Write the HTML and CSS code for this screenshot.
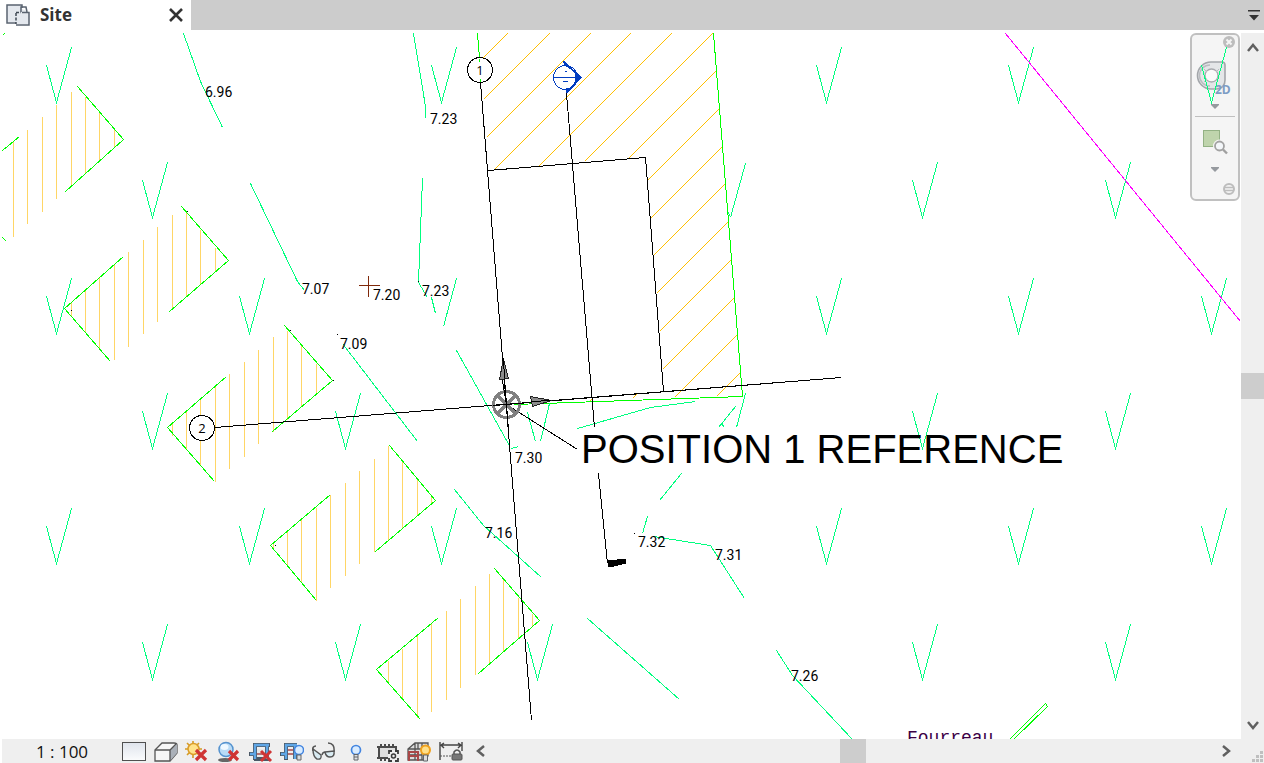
FILE: index.html
```html
<!DOCTYPE html>
<html lang="en">
<head>
<meta charset="utf-8">
<title>Site</title>
<link rel="stylesheet" href="styles.css">
</head>
<body>
<div class="app">
  <header class="tabs">
    <div class="tab">
      <svg class="tab-icon" width="24" height="22" viewBox="0 0 24 22">
        <path d="M1 1h15v4l7 3v12H11v-2H1z" fill="#e4e8ee"/>
        <path d="M16 4V1H1v18h9" fill="none" stroke="#5a6370" stroke-width="1.500"/>
        <path d="M15 8V3h5l1 5" fill="none" stroke="#5a6370" stroke-width="1.500"/>
        <path d="M10 8.500h5M10 9v11" fill="none" stroke="#3f4854" stroke-width="1.500" stroke-dasharray="3 1.500"/>
        <path d="M16 8.500h7V21H10" fill="none" stroke="#5a6370" stroke-width="1.500"/>
      </svg>
      <span class="tab-title">Site</span>
      <button class="tab-close" aria-label="Close Site">
        <svg width="14" height="14" viewBox="0 0 14 14"><path d="M1 1l12 12M13 1L1 13" stroke="#333" stroke-width="2.600"/></svg>
      </button>
    </div>
    <button class="tab-list" aria-label="List of views">
      <svg width="12" height="11" viewBox="0 0 12 11"><path d="M0 0h12v1.500H0zM1 5h10L6 10.500z" fill="#333"/></svg>
    </button>
  </header>

  <main class="view">
    <nav class="navbar" aria-label="Navigation bar">
      <button class="nav-dot" aria-label="Close navigation bar">
        <svg width="12" height="12" viewBox="0 0 12 12"><circle cx="6" cy="6" r="6" fill="#bdbdbd"/><path d="M3.500 3.500l5 5M8.500 3.500l-5 5" stroke="#f5f5f5" stroke-width="2"/></svg>
      </button>
      <button class="nav-wheel" aria-label="2D steering wheel">
        <svg width="36" height="36" viewBox="0 0 36 36">
          <path d="M14 2h11q3 0 3 3v15q0 8-8 9h-6A13.500 13.500 0 0 1 14 2z" fill="#e4e6e8" stroke="#a3a6aa" stroke-width="1.600"/>
          <path d="M13 5A10.500 10.500 0 0 0 13 26" fill="none" stroke="#bbbdc1" stroke-width="1.500"/>
          <circle cx="14.500" cy="15.500" r="6.500" fill="#fafafa" stroke="#a8aaae" stroke-width="1.300"/>
          <path d="M7 9l3 3M22 9l-3 3M7 22l3-3" stroke="#bbbdc1"/>
          <text class="wheel-label" x="18" y="34">2D</text>
        </svg>
      </button>
      <button class="nav-caret" aria-label="Wheel options"><svg width="8" height="5" viewBox="0 0 8 5"><path d="M0 0h8v1L4 5 0 1z" fill="#969a9f"/></svg></button>
      <hr class="nav-rule">
      <button class="nav-zoom" aria-label="Zoom in region">
        <svg width="25" height="26" viewBox="0 0 25 26">
          <rect x=".5" y="1.500" width="16" height="16" fill="#bfd4ac" stroke="#93b184"/>
          <path d="M19 20l5 5" stroke="#f5f5f5" stroke-width="5"/>
          <circle cx="16.500" cy="17" r="6.500" fill="#f5f5f5"/>
          <circle cx="16.500" cy="17" r="4.500" fill="#f4f7fa" stroke="#a3a3a3" stroke-width="1.800"/>
          <path d="M20 20.500l4 4" stroke="#a0a0a0" stroke-width="2.400"/>
        </svg>
      </button>
      <button class="nav-caret nav-caret-low" aria-label="Zoom options"><svg width="8" height="5" viewBox="0 0 8 5"><path d="M0 0h8v1L4 5 0 1z" fill="#969a9f"/></svg></button>
      <button class="nav-dot nav-more" aria-label="Customize">
        <svg width="12" height="12" viewBox="0 0 12 12"><circle cx="6" cy="6" r="5" fill="none" stroke="#bdbdbd" stroke-width="2"/><path d="M2 4.500h8M2 7.500h8" stroke="#bdbdbd" stroke-width="1.500"/></svg>
      </button>
    </nav>

    <svg class="drawing" role="img" aria-label="Site plan">
      <defs>
        <path id="grass" d="M-10-37L0 0 15-55"/>
      </defs>
      <g transform="translate(-1.500 -32.500)">
        <path class="hatch" d="M13 141V236M27 129V223M42 116V211M56 104V198M71 91V186M85 96V173M99 112V161M114 129V147
          M71 301V315M85 288V332M99 277V348M114 264V359M128 251V346M143 239V333M157 226V321M172 214V308M186 212V296M200 229V284M215 247V270
          M172 423V435M186 411V448M200 398V465M215 386V481M229 373V468M244 361V456M258 349V443M273 336V431M287 330V419M301 345V406M316 363V393
          M273 543V548M287 530V565M301 518V581M316 507V600M330 494V587M345 482V575M359 470V563M374 458V551M388 445V539M402 461V527M417 479V515M431 495V503
          M388 660V682M402 648V698M417 635V717M431 622V711M446 610V699M460 598V687M475 585V674M489 573V662M503 579V650M518 597V638M532 613V626"/>
        <path class="roof" d="M507 33L480 60M549 33L483 99M590 33L486 137M630 33L494 169M671 33L538 166M712 33L584 161M716 70L628 158M719 108L647 180M722 146L650 218M725 183L653 255M728 221L656 293M731 259L659 331M734 297L662 369M737 334L674 397M740 372L716 396M592 398L589 401M636 394L632 398"/>
        <path class="edge" d="M77 86L123 139 65 191M2 150L19 136M2 237L6 241M2 35L4 33
          M181 206L228 260 169 311M123 256L64 308 110 361
          M284 325L332 380 272 431M226 376L167 427 214 481
          M389 445L435 500 375 551M330 494L270 545 316 600
          M494 568L539 620 478 673M438 617L376 669 420 719
          M477 33L479 57M480 77V82M713 33L742 396 514 404
          M1009 739L1045 703 1047 706 1013 739"/>

        <g class="survey">
          <use href="#grass" x="56" y="102"/><use href="#grass" x="441" y="102"/><use href="#grass" x="826" y="102"/><use href="#grass" x="1018" y="102"/><use href="#grass" x="1211" y="102"/>
          <use href="#grass" x="152" y="217"/><use href="#grass" x="922" y="217"/><use href="#grass" x="1115" y="217"/>
          <use href="#grass" x="56" y="333"/><use href="#grass" x="249" y="333"/><use href="#grass" x="826" y="333"/><use href="#grass" x="1018" y="333"/><use href="#grass" x="1211" y="333"/>
          <use href="#grass" x="152" y="448"/><use href="#grass" x="345" y="448"/><use href="#grass" x="922" y="448"/><use href="#grass" x="1115" y="448"/>
          <use href="#grass" x="56" y="563"/><use href="#grass" x="249" y="563"/><use href="#grass" x="441" y="563"/><use href="#grass" x="826" y="563"/><use href="#grass" x="1018" y="563"/><use href="#grass" x="1211" y="563"/>
          <use href="#grass" x="152" y="679"/><use href="#grass" x="345" y="679"/><use href="#grass" x="537" y="679"/><use href="#grass" x="922" y="679"/><use href="#grass" x="1115" y="679"/>
          <path d="M745 163L730 217M728 212L730 217M456 278L443 326M431 297L435 313M527 412L535 441M549 403L540 441M745 393L736 427M722 423L723 427M647 516L642 533"/>
          <path d="M183 33L200 81 222 127M250 183L297 281 304 290M413 33L425 106V117M422 178L418 282 427 297M343 344L345 347 417 441M456 350L510 447M511 448L518 446M454 489L483 525 541 577M577 428L650 407 695 401M735 406L718 427M681 473L659 500M653 536L710 545 744 598M587 618L679 699M776 650L792 675 852 739"/>
        </g>
        <path class="boundary" d="M1005 33L1240 321"/>

        <path class="ink" d="M488 170L645 157 663 391M566 93L594 427M598 473L607 563M214 427L841 377M480 82L531 720M506 404L577 449"/>
        <path d="M607 560L625 558V563L613 566H607z" fill="#000"/>
        <path class="ink" d="M336 334h1M417 281h1M633 533h1M186 211h1M70 310h1M289 330h1M332 380h1M274 545h1"/>
        <path class="cross" d="M358 285H379M368 275V296"/>

        <circle class="bubble" cx="479.500" cy="69.500" r="12.500"/>
        <path class="edge" d="M479 58V61M480 78V81"/>
        <circle class="bubble" cx="201.500" cy="427.500" r="12.500"/>

        <circle cx="565" cy="77" r="12" class="section"/>
        <path d="M563 61L580 77 566 92" class="section-edge"/>
        <path d="M563 61L572 69 563 65zM574 70L580 77 574 83zM565 88L571 87 566 93z" fill="#003cc0"/>
        <path d="M552 77H579M564 71h2M562 81h5" class="section"/>

        <g class="base">
          <circle cx="506" cy="404" r="13"/>
          <path d="M497 395L515 413M515 395L497 413"/>
        </g>
        <path class="ink" d="M493 405L841 377M504 378L508 430M501 375L506 404"/>
        <path class="arrow" d="M503 358L499 379 508 378zM551 400L530 396 532 406z"/>
        <path class="ink" d="M503 358L504 378M551 400L531 401"/>
      </g>

      <g transform="translate(-2 -33)">
        <text class="grid-no" x="480" y="75">1</text>
        <text class="grid-no" x="202" y="433">2</text>
        <g class="spot">
          <text x="205" y="97">6.96</text>
          <text x="430" y="124">7.23</text>
          <text x="302" y="294">7.07</text>
          <text x="373" y="300">7.20</text>
          <text x="422" y="296">7.23</text>
          <text x="340" y="349">7.09</text>
          <text x="515" y="463">7.30</text>
          <text x="485" y="538">7.16</text>
          <text x="638" y="547">7.32</text>
          <text x="715" y="560">7.31</text>
          <text x="791" y="681">7.26</text>
        </g>
        <text class="duct" x="907" y="743">Fourreau</text>
        <text class="note" x="581" y="463">POSITION 1 REFERENCE</text>
      </g>
    </svg>
  </main>

  <div class="vscroll">
    <button class="arrow-btn" aria-label="Scroll up"><svg width="12" height="9" viewBox="0 0 12 9"><path d="M1 8l5-6 5 6" fill="none" stroke="#606060" stroke-width="2.500"/></svg></button>
    <div class="track"><div class="thumb"></div></div>
    <button class="arrow-btn" aria-label="Scroll down"><svg width="12" height="9" viewBox="0 0 12 9"><path d="M1 1l5 6 5-6" fill="none" stroke="#606060" stroke-width="2.500"/></svg></button>
  </div>

  <footer class="status">
    <button class="scale">1 : 100</button>
    <div class="tools">
      <button aria-label="Detail level"><svg viewBox="0 0 24 22"><defs><linearGradient id="pane" x1="0" y1="0" x2="0" y2="1"><stop offset="0" stop-color="#dfe4ec"/><stop offset="1" stop-color="#fbfcfd"/></linearGradient></defs><rect x=".5" y="1.500" width="23" height="18" fill="url(#pane)" stroke="#505050"/></svg></button>
      <button aria-label="Visual style"><svg viewBox="0 0 24 22"><path d="M1 9L8 2h12q3 0 3 2v8l-7 8H1z" fill="#f7f7f7" stroke="#555" stroke-width="1.300"/><path d="M16 9v11l7-8V3z" fill="#aab0b8"/><path d="M1 9h15l6-6M16 9v11" fill="none" stroke="#555" stroke-width="1.300"/></svg></button>
      <button aria-label="Sun path off"><svg viewBox="0 0 24 22"><path d="M8 0v17M0 8h17M2 2l13 13M14 2L2 14" stroke="#d59b25" stroke-width="1.600"/><circle cx="8.500" cy="8" r="5.500" fill="#ffe38a" stroke="#db9d29" stroke-width="1.500"/><path d="M11 9l10 10M21 9L11 19" stroke="#cf3434" stroke-width="3.200"/></svg></button>
      <button aria-label="Shadows off"><svg viewBox="0 0 24 22"><ellipse cx="8" cy="19" rx="7" ry="2" fill="#666"/><circle cx="9" cy="8.500" r="7" fill="#b9dbf6" stroke="#5593cf" stroke-width="1.500"/><ellipse cx="7.500" cy="6" rx="4" ry="3" fill="#eef8ff"/><path d="M12 10l9 9M21 10l-9 9" stroke="#cf3434" stroke-width="3.200"/></svg></button>
      <button aria-label="Crop view off"><svg viewBox="0 0 24 22"><path d="M6 19V4h15M0 13h6M18 2v16H5" fill="none" stroke="#4b5866" stroke-width="4"/><path d="M6 18V4h14M1 13h5M18 3v15" fill="none" stroke="#5fa6e6" stroke-width="2.400"/><path d="M8 8h8v8H8z" fill="#e8e8e8"/><path d="M8 13h7" stroke="#a94747" stroke-width="1.500"/><path d="M12 10l10 10M22 10L12 20" stroke="#cf3434" stroke-width="3"/></svg></button>
      <button aria-label="Hide crop region"><svg viewBox="0 0 24 22"><path d="M6 19V4h11M0 13h6M15 6v12" fill="none" stroke="#4b5866" stroke-width="4"/><path d="M6 18V4h11M1 13h5M15 4v14" fill="none" stroke="#5fa6e6" stroke-width="2.400"/><path d="M8 9h5M8 13h5" stroke="#a94747" stroke-width="1.500"/><circle cx="19" cy="9" r="4.500" fill="#d9ecff" stroke="#4385e0" stroke-width="1.500"/><path d="M17 14h4v5h-4z" fill="#d8dce0" stroke="#666"/></svg></button>
      <button aria-label="Temporary hide"><svg viewBox="0 0 24 22"><path d="M1 10Q0 5 4 5M10 14q1-4 4-2M16 2q7 0 6 9" fill="none" stroke="#555" stroke-width="1.500"/><path d="M1 8l8 6q1 5-4 4Q1 16 1 8zM13 11l9-1q1 6-4 6-4 0-5-5z" fill="#d9ebf2" stroke="#555" stroke-width="1.400"/></svg></button>
      <button aria-label="Reveal hidden elements"><svg viewBox="0 0 24 22"><circle cx="12" cy="9" r="4.500" fill="#d9ecff" stroke="#4385e0" stroke-width="1.700"/><path d="M10 13.500h4v5.500h-4z" fill="#dfe3e7" stroke="#60656a"/><path d="M10 16h4" stroke="#60656a"/></svg></button>
      <button aria-label="Temporary view properties"><svg viewBox="0 0 24 22"><path d="M1 6h20M1 17h11M3 5v13M20 5v5" fill="none" stroke="#4b4b4b" stroke-width="2"/><path d="M4 7h15v9H4z" fill="#dedede"/><path d="M5 3v3M9 3v3M13 3v3M17 3v3M5 17v3M9 17v3" stroke="#4b4b4b" stroke-width="2"/><rect x="12" y="9" width="11" height="12" fill="#efefef"/><path d="M13 13v-3h3M19 10h3v3M22 17v3h-3M16 20h-3v-3" fill="none" stroke="#3d3d3d" stroke-width="1.800"/><circle cx="17.500" cy="15" r="2" fill="#eee" stroke="#3d3d3d" stroke-width="1.500"/></svg></button>
      <button aria-label="Analytical model"><svg viewBox="0 0 24 22"><path d="M1 8l7-6h13v13l-5 4H1zM1 8h14M8 2v17M15 2v17M1 14h14M11 2v6" fill="#ddd" stroke="#555" stroke-width="1.300"/><path d="M2 20v-9h9v9M2 15h9" fill="none" stroke="#a94747" stroke-width="2"/><circle cx="18.500" cy="9" r="4.500" fill="#ffe08a" stroke="#f0a11c" stroke-width="2"/><path d="M16.500 14h4v6h-4z" fill="#ddd" stroke="#60656a"/></svg></button>
      <button aria-label="Reveal constraints"><svg viewBox="0 0 24 22"><path d="M1 1v18M23 1v9M2 4h20M5 2L2 4l3 3M19 2l3 2-3 3" fill="none" stroke="#444" stroke-width="1.400"/><path d="M1 15h12" stroke="#555" stroke-dasharray="2 1"/><path d="M15 13v-2q3-4 6 0v2" fill="none" stroke="#555" stroke-width="1.500"/><rect x="13" y="13" width="10" height="6" rx="1" fill="#777" stroke="#555"/></svg></button>
    </div>
    <div class="hscroll">
      <button class="arrow-btn" aria-label="Scroll left"><svg width="9" height="12" viewBox="0 0 9 12"><path d="M8 1L2 6l6 5" fill="none" stroke="#606060" stroke-width="2.500"/></svg></button>
      <div class="track"><div class="thumb"></div></div>
      <button class="arrow-btn" aria-label="Scroll right"><svg width="9" height="12" viewBox="0 0 9 12"><path d="M1 1l6 5-6 5" fill="none" stroke="#606060" stroke-width="2.500"/></svg></button>
    </div>
    <svg class="grip" width="12" height="12" viewBox="0 0 12 12"><path d="M8 0h3v3H8zM4 4h3v3H4zM8 4h3v3H8zM0 8h3v3H0zM4 8h3v3H4zM8 8h3v3H8z" fill="#bfbfbf"/></svg>
  </footer>
</div>
</body>
</html>
```
FILE: styles.css
```css
* { box-sizing: border-box; }

html, body { height: 100%; margin: 0; }

body {
  background: #fff;
  font-family: "Open Sans", "Noto Sans", sans-serif;
  overflow: hidden;
}

button {
  display: flex;
  align-items: center;
  justify-content: center;
  margin: 0;
  padding: 0;
  border: 0;
  background: none;
  color: inherit;
  font: inherit;
}

.app {
  display: grid;
  grid-template: 30px minmax(0, 1fr) 24px / minmax(0, 1fr) 23px;
  height: 100%;
}

/* View tabs */
.tabs {
  grid-column: 1 / -1;
  display: flex;
  justify-content: space-between;
  background: #ccc;
}

.tab {
  display: flex;
  align-items: center;
  width: 191px;
  padding: 0 8px 0 6px;
  background: #fff;
}

.tab-title {
  flex: 1;
  margin-left: 10px;
  color: #333;
  font-size: 17px;
  font-weight: 700;
  line-height: 30px;
}

.tab-list { width: 20px; }

/* Drawing area */
.view {
  position: relative;
  min-width: 0;
  padding: 3px 1px 0 2px;
}

.drawing {
  position: relative;
  display: block;
  width: 100%;
  height: 100%;
  overflow: hidden;
  pointer-events: none;
  fill: none;
  stroke-width: 1px;
  shape-rendering: crispEdges;
}

.hatch { stroke: #ffd666; }
.roof { stroke: #ffbf00; }
.edge { stroke: #00ff00; }
.survey { stroke: #00ff80; }
.boundary { stroke: #ff00ff; }
.ink { stroke: #000; }
.cross { stroke: #80290a; }
.bubble { fill: #fff; stroke: #000; }
.section { fill: #fff; stroke: #003cc0; }
.section-edge { stroke: #003cc0; stroke-width: 2px; }
.base { stroke: #808080; stroke-width: 3px; }
.arrow { fill: #8c8c8c; stroke: #222; }

.drawing text { fill: #000; stroke: none; }

.drawing .grid-no {
  font: 13px "Open Sans", sans-serif;
  text-anchor: middle;
}

.spot { font: 14px Roboto, "Liberation Sans", sans-serif; }

.drawing .duct {
  fill: #3c0046;
  font: 18px "Liberation Mono", monospace;
}

.note { font: 40px "Liberation Sans", Arial, sans-serif; }

/* Navigation bar */
.navbar {
  position: absolute;
  top: 3px;
  right: 1px;
  display: flex;
  flex-direction: column;
  align-items: center;
  width: 50px;
  height: 168px;
  padding: 1px 3px;
  border: 2px solid #c0c0c0;
  border-radius: 6px;
  background: #f5f5f5;
}

.nav-dot { align-self: flex-end; }
.nav-wheel { margin-top: 12px; }
.nav-wheel svg { overflow: visible; }
.nav-caret { height: 20px; }
.nav-zoom { margin-top: 12px; height: 26px; }
.nav-caret-low { margin-top: 4px; }
.nav-more { margin-top: 4px; }

.nav-rule {
  width: 40px;
  height: 1px;
  margin: 0;
  border: 0;
  background: #c0c0c0;
}

.wheel-label {
  fill: #7d9cc4;
  font: 700 12px "Open Sans", sans-serif;
}

/* Scroll bars */
.vscroll {
  display: flex;
  flex-direction: column;
  margin-top: 3px;
  background: #efefef;
}

.track {
  display: flex;
  flex: 1;
}

.thumb { background: #cdcdcd; }
.vscroll .thumb { width: 23px; height: 26px; margin: auto 0; }
.vscroll .arrow-btn { height: 28px; }

.hscroll {
  display: flex;
  flex: 1;
  margin-left: 5px;
}

.hscroll .thumb { width: 26px; margin: 0 auto; }
.hscroll .arrow-btn { width: 24px; }

/* View control bar */
.status {
  grid-column: 1 / -1;
  display: flex;
  margin-left: 2px;
  background: #efefef;
}

.scale {
  width: 120px;
  color: #111;
  font-size: 17px;
}

.tools {
  display: flex;
  justify-content: space-between;
  align-items: flex-end;
  width: 341px;
}

.tools svg { display: block; width: 24px; height: 22px; }

.grip { align-self: flex-end; margin-left: 14px; }
```
